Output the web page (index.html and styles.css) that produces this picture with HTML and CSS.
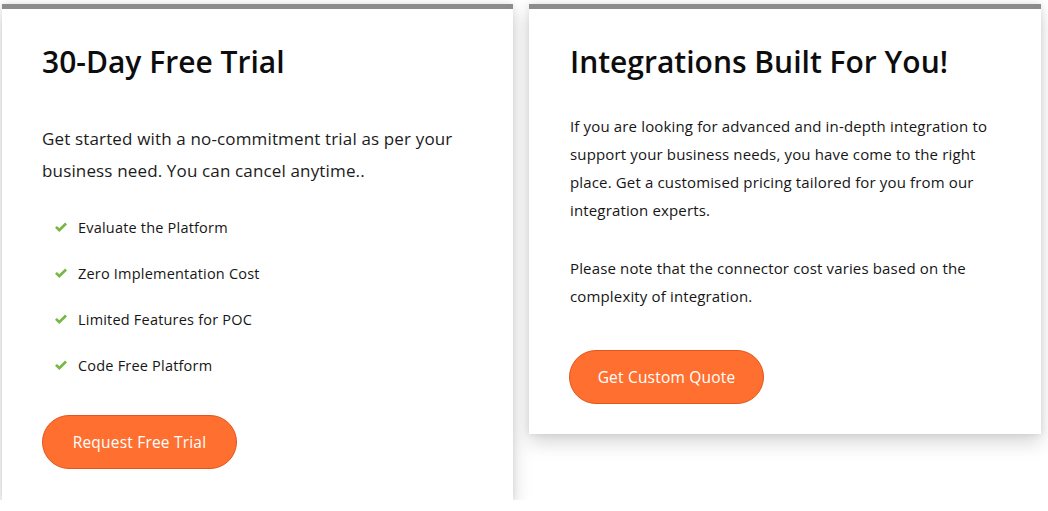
FILE: index.html
```html
<!DOCTYPE html>
<html lang="en">
<head>
<meta charset="utf-8">
<title>Plans</title>
<link rel="stylesheet" href="styles.css">
</head>
<body>
<div class="cards">
  <section class="card card-trial">
    <h2 class="card-title">30-Day Free Trial</h2>
    <p class="lead">Get started with a no-commitment trial as per your<br>business need. You can cancel anytime..</p>
    <ul class="features">
      <li><svg class="check" viewBox="0 0 14 11" width="14" height="11"><path d="M1 5.8 L2.9 3.9 L5.3 6.3 L11.1 0.5 L13 2.4 L5.3 10.1 Z" fill="#78b746"/></svg><span>Evaluate the Platform</span></li>
      <li><svg class="check" viewBox="0 0 14 11" width="14" height="11"><path d="M1 5.8 L2.9 3.9 L5.3 6.3 L11.1 0.5 L13 2.4 L5.3 10.1 Z" fill="#78b746"/></svg><span>Zero Implementation Cost</span></li>
      <li><svg class="check" viewBox="0 0 14 11" width="14" height="11"><path d="M1 5.8 L2.9 3.9 L5.3 6.3 L11.1 0.5 L13 2.4 L5.3 10.1 Z" fill="#78b746"/></svg><span>Limited Features for POC</span></li>
      <li><svg class="check" viewBox="0 0 14 11" width="14" height="11"><path d="M1 5.8 L2.9 3.9 L5.3 6.3 L11.1 0.5 L13 2.4 L5.3 10.1 Z" fill="#78b746"/></svg><span>Code Free Platform</span></li>
    </ul>
    <a class="btn" href="#">Request Free Trial</a>
  </section>
  <section class="card card-integrations">
    <h2 class="card-title">Integrations Built For You!</h2>
    <p class="body-text">If you are looking for advanced and in-depth integration to<br>support your business needs, you have come to the right<br>place. Get a customised pricing tailored for you from our<br>integration experts.</p>
    <p class="body-text note">Please note that the connector cost varies based on the<br>complexity of integration.</p>
    <a class="btn" href="#">Get Custom Quote</a>
  </section>
</div>
</body>
</html>
```

FILE: styles.css
```css
html, body {
  margin: 0;
  padding: 0;
  background: #ffffff;
}

body {
  font-family: "Open Sans", "Liberation Sans", sans-serif;
  color: #151515;
}

.cards {
  display: flex;
  align-items: flex-start;
  gap: 16px;
  padding: 4px 0 0 2px;
}

.card {
  box-sizing: border-box;
  background: #fff;
  border-top: 5px solid #8c8c8c;
  box-shadow: 0 8px 18px rgba(0, 0, 0, 0.17), 0 0 7px rgba(0, 0, 0, 0.09);
  display: flex;
  flex-direction: column;
  align-items: flex-start;
}

.card-trial {
  width: 511px;
  padding: 35px 20px 31px 40px;
}

.card-integrations {
  width: 512px;
  padding: 35px 20px 30px 41px;
}

.card-title {
  margin: 0;
  font-size: 30px;
  line-height: 36px;
  font-weight: 600;
  color: #0d0d0d;
  letter-spacing: 0;
}

.lead {
  margin: 43px 0 0;
  font-size: 17px;
  line-height: 32px;
  letter-spacing: 0.15px;
  color: #1b1b1b;
}

.features {
  list-style: none;
  margin: 29px 0 0;
  padding: 0;
  display: flex;
  flex-direction: column;
  gap: 24px;
}

.features li {
  display: flex;
  align-items: center;
  height: 22px;
  font-size: 14.5px;
  font-weight: 500;
  letter-spacing: 0.2px;
  color: #161616;
}

.check {
  margin: 1px 10px 0 12px;
  flex: none;
}

.body-text {
  margin: 32px 0 0;
  font-size: 15px;
  line-height: 28px;
  letter-spacing: 0.15px;
  color: #161616;
}

.note {
  margin-top: 30px;
}

.btn {
  margin-top: 40px;
  box-sizing: border-box;
  width: 195px;
  height: 54px;
  border-radius: 27px;
  background: #ff7030;
  border: 1px solid #e2561a;
  color: #fff;
  font-size: 15.5px;
  letter-spacing: 0.2px;
  display: flex;
  align-items: center;
  justify-content: center;
  text-decoration: none;
}

.card-trial .btn {
  margin-top: 39px;
}

.card-integrations .btn {
  margin-left: -1px;
}
```
